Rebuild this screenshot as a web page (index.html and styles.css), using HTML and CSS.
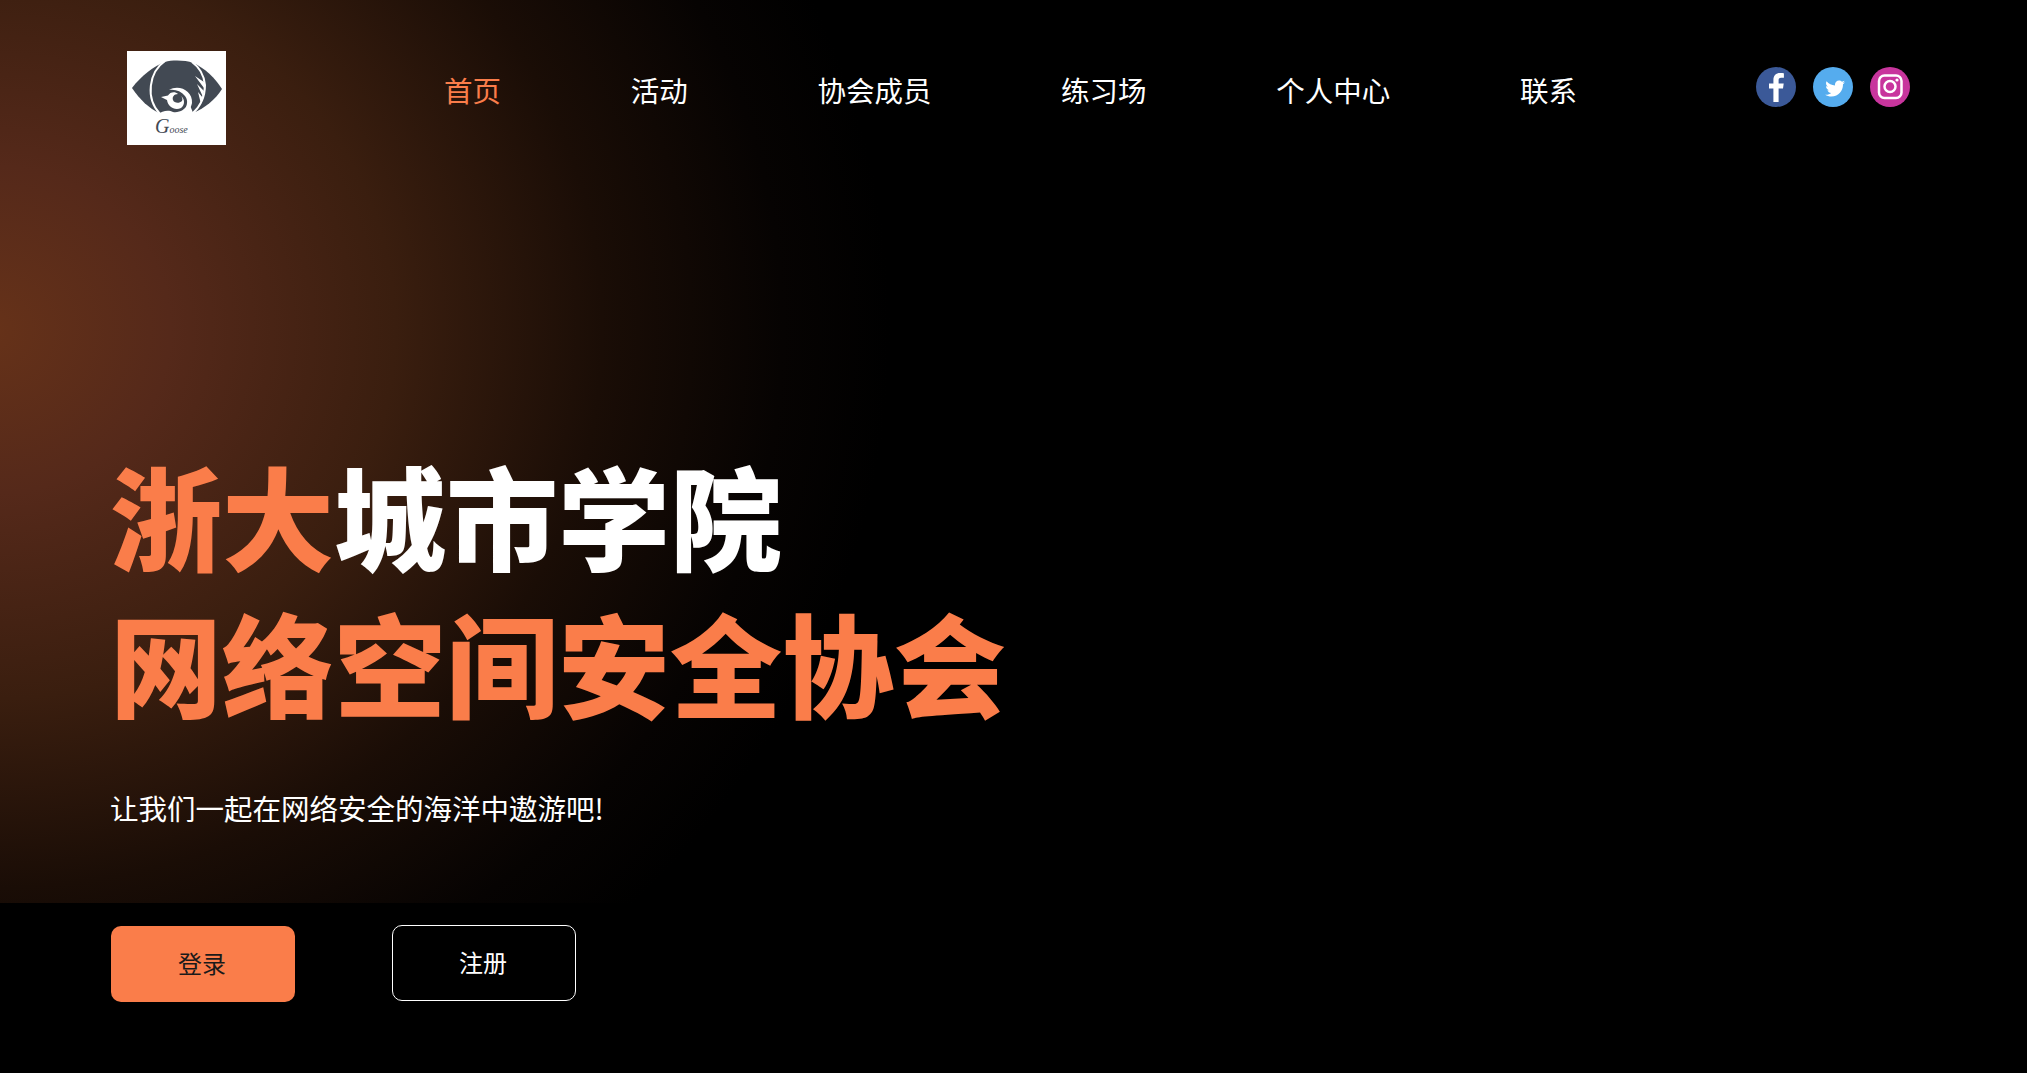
FILE: index.html
```html
<!DOCTYPE html>
<html lang="zh-CN">
<head>
<meta charset="utf-8">
<title>浙大城市学院网络空间安全协会</title>
<link rel="stylesheet" href="styles.css">
</head>
<body>
<div class="hero">
  <header class="header">
    <div class="logo">
      <svg viewBox="0 0 99 94" width="99" height="94">
        <path class="eye" d="M5 37C14 25 27 15 38 11C45 9 58 9 66 12C78 17 88 27 95 38C88 49 78 57 66 62C58 65 42 65 32 62C22 57 13 49 5 37Z"/>
        <path class="cut-line" d="M38 10C22 21 18 47 33 63"/>
        <path class="cut-line" d="M65 11C72 16 77 24 78 34C78 46 73 56 65 63"/>
        <path class="cut" d="M68 25L77 31L77 37Z M70 33L77 40L76 46Z M71 41L76 47L74 53Z"/>
        <path class="cut" d="M30 64C36 59 42 59 46 61C52 62 58 59 62 52L67 64L50 68Z"/>
        <path class="cut" d="M42 39C52 33 66 40 65 52C64 58 60 61 55 63C60 56 62 50 58 45C54 40 48 38 42 39Z"/>
        <path class="cut" d="M34 46L41 44.5C43 41 48 40 51 43C47 43 45 46 46 49C47 52 52 53 55 50C56 48 55 46 54 45C58 48 58 54 54 57C48 60 41 56 40 49Z"/>
        <text class="sig" x="28" y="82"><tspan class="sig-g">G</tspan>oose</text>
      </svg>
    </div>
    <nav class="nav">
      <a class="nav-link active">首页</a>
      <a class="nav-link">活动</a>
      <a class="nav-link">协会成员</a>
      <a class="nav-link">练习场</a>
      <a class="nav-link">个人中心</a>
      <a class="nav-link">联系</a>
    </nav>
    <div class="social">
      <svg class="icon" viewBox="0 0 40 40"><circle cx="20" cy="20" r="20" fill="#3b5998"/><path fill="#fff" d="M22.6 35V21.5h4.4l.7-5h-5.1v-3.2c0-1.5.5-2.5 2.6-2.5h2.7V6.2c-.5-.1-2.1-.2-3.9-.2-3.9 0-6.6 2.4-6.6 6.8v3.7h-4.4v5h4.4V35z"/></svg>
      <svg class="icon" viewBox="0 0 40 40"><circle cx="20" cy="20" r="20" fill="#55acee"/><path fill="#fff" transform="translate(20.5 22.5) scale(.92) translate(-20 -20)" d="M32.5 12.2c-.9.4-1.5.5-2.5.7.9-.6 1.7-1.4 2-2.4-.9.5-1.7.9-2.8 1.1-.8-.9-2-1.4-3.2-1.4-2.4 0-4.4 2-4.4 4.4 0 .3 0 .7.1 1-3.7-.2-7-2-9.2-4.6-.4.7-.6 1.4-.6 2.2 0 1.5.8 2.9 2 3.7-.7 0-1.4-.2-2-.6v.1c0 2.1 1.5 3.9 3.5 4.3-.6.2-1.3.2-2 .1.6 1.7 2.2 3 4.1 3-1.5 1.2-3.4 1.9-5.5 1.9-.4 0-.7 0-1.1-.1 2 1.2 4.3 2 6.8 2 8.1 0 12.6-6.7 12.6-12.6v-.6c.9-.6 1.6-1.4 2.2-2.2z"/></svg>
      <svg class="icon" viewBox="0 0 40 40"><circle cx="20" cy="20" r="20" fill="#c8359d"/><rect x="9" y="8.5" width="22.500" height="22.500" rx="5.500" fill="none" stroke="#fff" stroke-width="2.500"/><circle cx="20" cy="19.500" r="5.500" fill="none" stroke="#fff" stroke-width="2.500"/><circle cx="27" cy="13" r="1.600" fill="#fff"/></svg>
    </div>
  </header>
  <section class="intro">
    <h1 class="title"><span class="accent">浙大</span>城市学院<br><span class="accent">网络空间安全协会</span></h1>
    <p class="tagline">让我们一起在网络安全的海洋中遨游吧!</p>
  </section>
</div>
<div class="actions">
  <a class="btn btn-primary">登录</a>
  <a class="btn btn-outline">注册</a>
</div>
</body>
</html>
```
FILE: styles.css
```css
* { box-sizing: border-box; }
html, body { margin: 0; padding: 0; }
body {
  height: 1073px;
  overflow: hidden;
  background: #000;
  color: #fff;
  font-family: "Noto Sans CJK SC", "Liberation Sans", sans-serif;
}
.hero {
  height: 903px;
  padding-top: 51px;
  background: radial-gradient(ellipse 900px 820px at -10px 330px, #663219 0%, #55291a 20%, #3a1e0f 45%, #1a0d06 68%, #060302 88%, #000 100%);
}
.header {
  display: flex;
  align-items: flex-start;
  padding-left: 127px;
}
.logo {
  width: 99px;
  height: 94px;
  background: #fff;
  flex: none;
  display: flex;
}
.eye { fill: #424953; }
.cut { fill: #fff; }
.cut-line { fill: none; stroke: #fff; stroke-width: 2; }
.sig {
  fill: #424953;
  font-family: "Liberation Serif", serif;
  font-style: italic;
  font-size: 10px;
}
.sig-g { font-size: 20px; }
.nav {
  display: flex;
  gap: 129.7px;
  margin-left: 218px;
  margin-top: 19px;
}
.nav-link {
  font-size: 28.5px;
  line-height: 40px;
  color: #fff;
}
.nav-link.active { color: #fa7d4a; }
.social {
  display: flex;
  gap: 17px;
  margin-left: 178.5px;
  margin-top: 16px;
}
.icon { width: 40px; height: 40px; display: block; }
.intro { padding: 296px 0 0 110px; }
.title {
  margin: 0;
  font-size: 112px;
  font-weight: 900;
  line-height: 147px;
  color: #fff;
}
.accent { color: #fa7d4a; }
.tagline {
  margin: 53px 0 0;
  font-size: 28.5px;
  line-height: 40px;
}
.actions {
  display: flex;
  gap: 97px;
  padding: 22px 0 0 111px;
}
.btn {
  width: 184px;
  height: 76px;
  border-radius: 10px;
  display: flex;
  align-items: center;
  justify-content: center;
  font-size: 24px;
  padding: 0 2px 3px 0;
}
.btn-primary { background: #fa7d4a; color: #1a1a1a; margin-top: 1px; }
.btn-outline { border: 1px solid #fff; color: #fff; }
```
